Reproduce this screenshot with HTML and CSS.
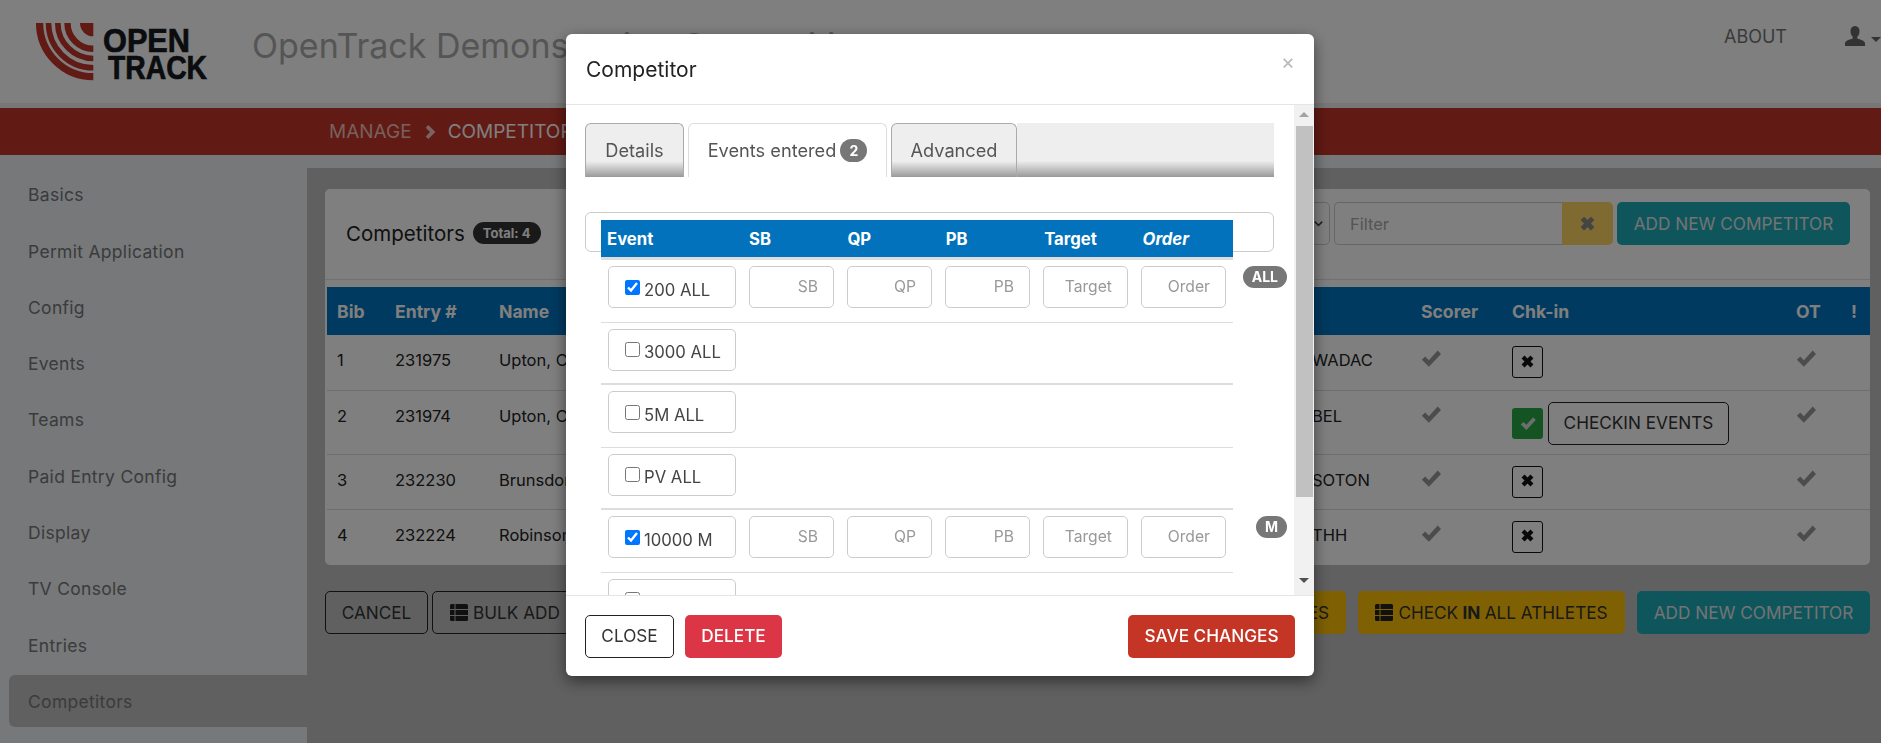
FILE: index.html
```html
<!DOCTYPE html>
<html lang="en">
<head>
<meta charset="utf-8">
<title>OpenTrack – Competitors</title>
<link rel="stylesheet" href="styles.css">
</head>
<body>
<svg class="defs" aria-hidden="true">
  <symbol id="i-check" viewBox="0 0 24 20"><path d="M1 11.5 L5 7.5 L9.5 12 L20 0.5 L24 4.5 L9.5 20 Z"/></symbol>
  <symbol id="i-x" viewBox="0 0 24 24"><path d="M6.5 1 L12 6.5 L17.5 1 L23 6.5 L17.5 12 L23 17.5 L17.5 23 L12 17.5 L6.5 23 L1 17.5 L6.5 12 L1 6.5 Z"/></symbol>
  <symbol id="i-list" viewBox="0 0 18 18"><path d="M0 1.5 Q0 0 1.5 0 H4.500 V5 H0 Z M5.500 0 H16.500 Q18 0 18 1.500 V5 H5.500 Z M0 6 H4.500 V11 H0 Z M5.500 6 H18 V11 H5.500 Z M0 12 H4.500 V17 H1.500 Q0 17 0 15.500 Z M5.500 12 H18 V15.500 Q18 17 16.500 17 H5.500 Z"/></symbol>
  <symbol id="i-user" viewBox="0 0 20 20"><path d="M10 0 C13 0 14.500 2.200 14.500 5.200 C14.500 7.600 13.600 9.600 12.300 10.800 L12.300 12.500 C15.500 13.600 19.500 14.600 20 17 L20 20 L0 20 L0 17 C.5 14.600 4.500 13.600 7.700 12.500 L7.700 10.800 C6.400 9.600 5.500 7.600 5.500 5.200 C5.500 2.200 7 0 10 0 Z"/></symbol>
  <symbol id="i-chev" viewBox="0 0 12 16"><path d="M3.500 0 L11.500 8 L3.500 16 L0.500 13 L5.500 8 L0.500 3 Z"/></symbol>
</svg>

<header class="topbar">
  <svg class="logo" viewBox="0 0 172 58" role="img" aria-label="OpenTrack">
    <g class="logo-arcs">
      <path d="M0 0 A53.700 53.700 0 0 0 53.700 53.700" transform="translate(3.600 0)"/>
      <path d="M0 0 A44.800 44.800 0 0 0 44.800 44.800" transform="translate(12.500 0)"/>
      <path d="M0 0 A35.500 35.500 0 0 0 35.500 35.500" transform="translate(21.800 0)"/>
      <path d="M0 0 A25.800 25.800 0 0 0 25.800 25.800" transform="translate(31.500 0)"/>
    </g>
    <path class="logo-core" d="M44 0 H57.300 V13.300 A13.300 13.300 0 0 1 44 0 Z"/>
    <text class="logo-text" x="67" y="29" textLength="87" lengthAdjust="spacingAndGlyphs">OPEN</text>
    <text class="logo-text" x="72" y="56" textLength="99" lengthAdjust="spacingAndGlyphs">TRACK</text>
  </svg>
  <h1 class="site-title">OpenTrack Demonstration Competition</h1>
  <nav class="topnav">
    <a class="topnav-link">ABOUT</a>
    <span class="usermenu"><svg class="icon-user"><use href="#i-user"/></svg><span class="caret"></span></span>
  </nav>
</header>

<div class="crumbbar">
  <span class="crumb-muted">MANAGE</span>
  <svg class="crumb-chev"><use href="#i-chev"/></svg>
  <span class="crumb-current">COMPETITORS</span>
</div>

<div class="layout">
  <aside class="sidebar">
    <a class="side-item">Basics</a>
    <a class="side-item">Permit Application</a>
    <a class="side-item">Config</a>
    <a class="side-item">Events</a>
    <a class="side-item">Teams</a>
    <a class="side-item">Paid Entry Config</a>
    <a class="side-item">Display</a>
    <a class="side-item">TV Console</a>
    <a class="side-item">Entries</a>
    <a class="side-item side-active">Competitors</a>
  </aside>

  <main class="content">
    <section class="panel">
      <div class="panel-head">
        <div class="panel-title"><span>Competitors</span><span class="pill-total">Total: 4</span></div>
        <div class="panel-tools">
          <div class="fake-select"><svg class="sel-chev" viewBox="0 0 12 8"><path d="M1 1.500 L6 6.500 L11 1.500"/></svg></div>
          <div class="filter">
            <input class="filter-input" placeholder="Filter">
            <span class="filter-clear"><svg class="icon-x-lg"><use href="#i-x"/></svg></span>
          </div>
          <a class="btn btn-teal btn-add-top">ADD NEW COMPETITOR</a>
        </div>
      </div>
      <table class="grid">
        <colgroup><col class="c-bib"><col class="c-entry"><col class="c-name"><col class="c-club"><col class="c-scorer"><col class="c-chk"><col class="c-ot"><col class="c-bang"></colgroup>
        <thead><tr><th>Bib</th><th>Entry #</th><th>Name</th><th></th><th>Scorer</th><th>Chk-in</th><th>OT</th><th>!</th></tr></thead>
        <tbody>
          <tr><td>1</td><td>231975</td><td>Upton, C</td><td>WADAC</td><td><svg class="tick"><use href="#i-check"/></svg></td><td class="td-chk"><span class="chk-cell"><span class="chk-off"><svg class="icon-x"><use href="#i-x"/></svg></span></span></td><td><svg class="tick"><use href="#i-check"/></svg></td><td></td></tr>
          <tr><td>2</td><td>231974</td><td>Upton, C</td><td>BEL</td><td><svg class="tick"><use href="#i-check"/></svg></td><td class="td-chk td-chk-tall"><span class="chk-cell"><span class="chk-on"><svg class="icon-ok"><use href="#i-check"/></svg></span><a class="btn btn-outline btn-checkin">CHECKIN EVENTS</a></span></td><td><svg class="tick"><use href="#i-check"/></svg></td><td></td></tr>
          <tr><td>3</td><td>232230</td><td>Brunsdon</td><td>SOTON</td><td><svg class="tick"><use href="#i-check"/></svg></td><td class="td-chk"><span class="chk-cell"><span class="chk-off"><svg class="icon-x"><use href="#i-x"/></svg></span></span></td><td><svg class="tick"><use href="#i-check"/></svg></td><td></td></tr>
          <tr><td>4</td><td>232224</td><td>Robinson</td><td>THH</td><td><svg class="tick"><use href="#i-check"/></svg></td><td class="td-chk"><span class="chk-cell"><span class="chk-off"><svg class="icon-x"><use href="#i-x"/></svg></span></span></td><td><svg class="tick"><use href="#i-check"/></svg></td><td></td></tr>
        </tbody>
      </table>
    </section>

    <div class="actions">
      <div class="actions-group">
        <a class="btn btn-outline btn-cancel">CANCEL</a>
        <a class="btn btn-outline"><svg class="icon-list"><use href="#i-list"/></svg>BULK ADD</a>
      </div>
      <div class="actions-group">
        <a class="btn btn-yellow"><svg class="icon-list"><use href="#i-list"/></svg>CHECK <b>OUT</b> ALL ATHLETES</a>
        <a class="btn btn-yellow btn-checkall"><svg class="icon-list"><use href="#i-list"/></svg>CHECK <b>IN</b> ALL ATHLETES</a>
        <a class="btn btn-teal btn-add-bottom">ADD NEW COMPETITOR</a>
      </div>
    </div>
  </main>
</div>

<div class="backdrop"></div>

<div class="modal-wrap">
  <div class="modal" role="dialog">
    <div class="modal-head">
      <h2 class="modal-title">Competitor</h2>
      <span class="modal-x">×</span>
    </div>
    <div class="modal-main">
      <div class="modal-body">
        <div class="tabs">
          <a class="tab tab-details">Details</a>
          <a class="tab tab-active">Events entered <span class="tab-count">2</span></a>
          <a class="tab tab-advanced">Advanced</a>
          <span class="tab-fill"></span>
        </div>
        <div class="search-card"></div>
        <div class="events">
          <div class="ev-head"><span class="ev-col-event">Event</span><span class="ev-col">SB</span><span class="ev-col">QP</span><span class="ev-col">PB</span><span class="ev-col">Target</span><span class="ev-col ev-order">Order</span></div>
          <div class="ev-row">
            <label class="ev-check"><input type="checkbox" checked>200 ALL</label>
            <input class="ev-input" placeholder="SB"><input class="ev-input" placeholder="QP"><input class="ev-input" placeholder="PB"><input class="ev-input" placeholder="Target"><input class="ev-input" placeholder="Order">
            <span class="ev-tag">ALL</span>
          </div>
          <div class="ev-row"><label class="ev-check"><input type="checkbox">3000 ALL</label></div>
          <div class="ev-row"><label class="ev-check"><input type="checkbox">5M ALL</label></div>
          <div class="ev-row"><label class="ev-check"><input type="checkbox">PV ALL</label></div>
          <div class="ev-row">
            <label class="ev-check"><input type="checkbox" checked>10000 M</label>
            <input class="ev-input" placeholder="SB"><input class="ev-input" placeholder="QP"><input class="ev-input" placeholder="PB"><input class="ev-input" placeholder="Target"><input class="ev-input" placeholder="Order">
            <span class="ev-tag ev-tag-round">M</span>
          </div>
          <div class="ev-row"><label class="ev-check"><input type="checkbox"></label></div>
        </div>
      </div>
      <div class="scroll" aria-hidden="true">
        <span class="scroll-up"></span>
        <span class="scroll-thumb"></span>
        <span class="scroll-down"></span>
      </div>
    </div>
    <div class="modal-foot">
      <div class="foot-left">
        <a class="btn btn-outline btn-close">CLOSE</a>
        <a class="btn btn-danger">DELETE</a>
      </div>
      <a class="btn btn-save">SAVE CHANGES</a>
    </div>
  </div>
</div>
</body>
</html>
```

FILE: styles.css
```css
* { box-sizing: border-box; }
html, body { margin: 0; height: 743px; overflow: hidden; }
body {
  background: #ecf0f4;
  color: #222;
  font-family: Inter, "Open Sans", sans-serif;
  font-size: 16.5px;
}
.defs { display: none; }
svg { fill: currentColor; }

/* top bar */
.topbar {
  height: 103px;
  background: #fff;
  display: flex;
  position: relative;
  padding: 23px 0 0 36px;
}
.logo { width: 172px; height: 58px; flex: none; overflow: visible; }
.logo-arcs path { fill: none; stroke: #c43428; }
.logo-arcs path:nth-child(1) { stroke-width: 7.3; }
.logo-arcs path:nth-child(2) { stroke-width: 5.6; }
.logo-arcs path:nth-child(3) { stroke-width: 5.7; }
.logo-arcs path:nth-child(4) { stroke-width: 6.4; }
.logo-core { fill: #c43428; }
.logo-text { font-family: "Liberation Sans", sans-serif; font-weight: 700; font-size: 33px; fill: #14181e; stroke: #14181e; stroke-width: .7px; }
.site-title {
  margin: 1px 0 0 44px;
  font-size: 34px;
  font-weight: 400;
  line-height: 44px;
  color: #ababab;
  white-space: nowrap;
}
.topnav { margin-left: auto; display: flex; align-items: flex-start; }
.topnav-link { font-size: 18px; color: #757575; line-height: 26px; margin-top: 1px; }
.usermenu { display: flex; margin-left: 58px; width: 36px; align-items: flex-start; color: #666; padding-top: 3px; }
.icon-user { width: 20px; height: 20px; }
.caret { width: 0; height: 0; border: 5px solid transparent; border-top-color: #666; border-bottom: 0; margin: 11px 0 0 6px; }

/* crumb bar */
.crumbbar {
  margin-top: 5px;
  height: 47px;
  background: #c43428;
  display: flex;
  align-items: center;
  padding-left: 329px;
  font-size: 19px;
  box-shadow: 0 -5px 0 #eee;
}
.crumb-muted { color: #f0c0bb; }
.crumb-chev { width: 11px; height: 14px; margin: 0 12px 0 13px; color: #f3c9c5; }
.crumb-current { color: #fff; }

/* layout */
.layout { display: flex; height: 588px; }
.sidebar { width: 307px; flex: none; padding: 12.3px 0 0 9px; display: flex; flex-direction: column; }
.side-item { height: 56.3px; line-height: 56.3px; padding-left: 19px; color: #777; white-space: nowrap; font-size: 17.5px; letter-spacing: .3px; }
.side-active { height: 52px; line-height: 54px; margin-top: 1.2px; background: #c0c0c0; color: #777; border-radius: 6px 0 0 6px; }
.content { flex: 1; margin-top: 13px; background: #c0c0c0; padding: 21px 11px 0 18px; min-width: 0; }

/* panel */
.panel { background: #fff; border-radius: 5px; height: 376px; }
.panel-head {
  height: 91px;
  border-bottom: 1px solid #e2e2e2;
  display: flex;
  justify-content: space-between;
  padding: 13px 20px 0 21px;
}
.panel-title { display: flex; align-items: center; height: 36px; margin-top: 13px; font-size: 20.5px; gap: 8px; color: #222; }
.pill-total { background: #333; color: #fff; font-size: 13px; font-weight: 700; height: 22px; line-height: 22px; border-radius: 11px; padding: 0 10px; }
.panel-tools { display: flex; gap: 4px; height: 43px; }
.fake-select { width: 90px; height: 43px; border: 1px solid #ccc; border-radius: 5px; display: flex; align-items: center; justify-content: flex-end; padding-right: 6px; }
.sel-chev { width: 9px; height: 7px; fill: none; stroke: #444; stroke-width: 2; }
.filter { display: flex; width: 279px; }
.filter-input { flex: 1; width: 0; height: 43px; border: 1px solid #ccc; border-right: 0; border-radius: 5px 0 0 5px; font: inherit; padding: 0 15px; background: #fff; }
.filter-input::placeholder { color: #aaa; }
.filter-clear { width: 51px; background: #ffd762; border-radius: 0 5px 5px 0; display: flex; align-items: center; justify-content: center; color: #888; }
.icon-x-lg { width: 15px; height: 15px; }

.btn {
  display: inline-flex;
  align-items: center;
  justify-content: center;
  height: 43px;
  padding: 0 17px;
  border-radius: 5px;
  font-size: 17.2px;
  white-space: nowrap;
}
.btn-teal { background: #1cabb9; color: #e6e6e6; }
.btn-add-top { width: 233px; padding: 0; }
.btn-add-bottom { width: 233px; padding: 0; }
.btn-cancel { width: 103px; padding: 0; }
.btn-checkin { width: 181px; padding: 0; }
.btn-checkall { width: 267px; padding: 0; }
.btn-outline { border: 1px solid #222; color: #333; }
.btn-yellow { background: #ffc107; color: #333; }
.btn-yellow b { font-weight: 700; margin: 0 .25em; }
.btn-danger { background: #dc3545; color: #fff; font-weight: 500; }
.btn-save { background: #c43526; color: #fff; font-weight: 500; }
.icon-list { width: 18px; height: 18px; margin-right: 5px; color: #222; }

/* table */
.grid { width: 1543px; table-layout: fixed; border-collapse: collapse; margin: 7px 0 0 2px; }
.c-bib { width: 56px; } .c-entry { width: 104px; } .c-name { width: 813px; } .c-club { width: 109px; }
.c-scorer { width: 91px; } .c-chk { width: 284px; } .c-ot { width: 55px; } .c-bang { width: 31px; }
.grid th { background: #0074c0; color: #fff; text-align: left; height: 48px; padding: 0 12px; font-size: 17.6px; font-weight: 700; }
.grid td { height: 55px; vertical-align: top; padding: 13px 12px 0; border-bottom: 1px solid #ddd; line-height: 24px; }
.grid th:first-child, .grid td:first-child { padding-left: 10px; }
.grid tr:last-child td { border-bottom: 0; }
.grid .td-chk { padding: 11px 12px 0; }
.grid .td-chk-tall { padding-bottom: 9px; }
.tick { width: 20px; height: 17px; color: #999; display: block; margin-top: 2px; }
.chk-cell { display: flex; align-items: center; gap: 5px; }
.chk-off { width: 31px; height: 32px; border: 1px solid #111; border-radius: 3px; display: flex; align-items: center; justify-content: center; color: #111; padding-bottom: 2px; }
.chk-on { width: 31px; height: 31px; background: #28a745; color: #ddd; border-radius: 3px; display: flex; align-items: center; justify-content: center; }
.icon-x { width: 13px; height: 13px; }
.icon-ok { width: 16px; height: 13px; }

/* action row */
.actions { display: flex; justify-content: space-between; margin-top: 26px; }
.actions-group { display: flex; gap: 4px; }
.actions-group + .actions-group { gap: 12px; }

/* backdrop & modal */
.backdrop { position: fixed; inset: 0; background: rgba(0, 0, 0, .5); }
.modal-wrap { position: fixed; inset: 0; display: flex; justify-content: center; padding: 34px 1px 0 0; }
.modal {
  width: 748px;
  height: 642px;
  background: #fff;
  border-radius: 6px;
  box-shadow: 0 5px 15px rgba(0, 0, 0, .5);
  display: flex;
  flex-direction: column;
}
.modal-head { height: 71px; flex: none; border-bottom: 1px solid #e5e5e5; display: flex; justify-content: space-between; padding: 0 19px 0 20px; align-items: center; }
.modal-title { margin: 0; font-size: 21px; font-weight: 400; color: #222; }
.modal-x { font-size: 21px; color: #bbb; margin-top: -15px; }
.modal-main { height: 490px; flex: none; display: flex; }
.modal-body { flex: 1; overflow: hidden; padding: 18px 0 0 19px; position: relative; min-width: 0; }

.tabs { display: flex; height: 54px; width: 689px; }
.tab {
  display: flex; align-items: center; justify-content: center; color: #555; font-size: 18.2px;
  border: 1px solid #aaa; border-bottom: 0; border-radius: 6px 6px 0 0;
  background: linear-gradient(#eee 70%, #999);
  margin-right: 4px;
  padding-bottom: 2px;
}
.tab-details { width: 99px; }
.tab-advanced { width: 126px; }
.tab-active { width: 199px; background: #fff; border-color: #ddd; gap: 4px; }
.tab-count { width: 27px; height: 23px; border-radius: 12px; background: #777; color: #fff; font-size: 14px; font-weight: 700; display: flex; align-items: center; justify-content: center; margin-top: 2px; }
.tab-fill { flex: 1; margin-left: -4px; background: linear-gradient(#eee 70%, #999); }

.search-card { width: 689px; height: 40px; margin-top: 35px; border: 1px solid #ccc; border-radius: 6px; }
.events { width: 632px; margin: -32px 0 0 16px; position: relative; }
.ev-head { display: flex; height: 40px; background: #0272bc; border-bottom: 3px solid #ddd; color: #fff; font-weight: 700; font-size: 16.7px; align-items: center; }
.ev-col-event { width: 148px; padding-left: 6px; flex: none; }
.ev-col { width: 98.4px; flex: none; }
.ev-order { font-style: italic; }
.ev-row { height: 62.5px; border-bottom: 1px solid #ddd; display: flex; align-items: flex-start; padding: 6px 0 0 8px; gap: 13px; position: relative; }
.ev-row:nth-child(odd) { border-bottom-width: 2px; }
.ev-check { width: 128px; height: 42px; margin-left: -1px; border: 1px solid #ccc; border-radius: 5px; display: flex; align-items: center; padding: 5px 0 0 16px; font-size: 16.7px; color: #444; flex: none; }
.ev-check input { width: 15px; height: 15px; margin: -5px 4px 0 0; }
.ev-input { width: 85px; height: 42px; border: 1px solid #ccc; border-radius: 5px; text-align: right; padding: 0 15px 2px 0; font: inherit; font-size: 15.7px; background: #fff; flex: none; }
.ev-input::placeholder { color: #999; }
.ev-tag { position: absolute; right: -54px; top: 6px; height: 22px; line-height: 22px; border-radius: 11px; background: #777; color: #fff; font-size: 14px; font-weight: 700; padding: 0 9px; }
.ev-tag-round { padding: 0 9px; }

.scroll { width: 20px; flex: none; background: #f1f1f1; position: relative; display: flex; flex-direction: column; align-items: center; }
.scroll-up, .scroll-down { width: 0; height: 0; border: 5px solid transparent; flex: none; }
.scroll-up { border-bottom-color: #a3a3a3; border-top: 0; margin: 7px 0 9px; }
.scroll-down { border-top-color: #505050; border-bottom: 0; margin-top: 81px; }
.scroll-thumb { width: 17px; height: 371px; background: #c1c1c1; }

.modal-foot { flex: 1; border-top: 1px solid #e5e5e5; display: flex; justify-content: space-between; padding: 19px 19px 0; }
.foot-left { display: flex; gap: 11px; }
.btn-close { width: 89px; padding: 0 0 2px; border-color: #222; }
.btn-danger { width: 97px; padding: 0 0 2px; }
.btn-save { width: 167px; padding: 0 0 2px; }
```
